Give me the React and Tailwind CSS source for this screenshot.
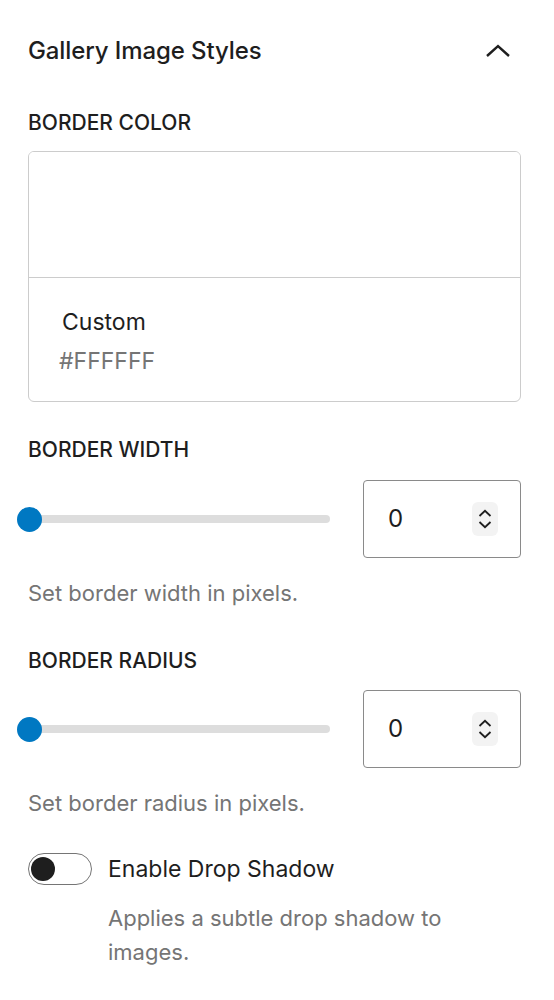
import { useState } from "react";

function Spinner() {
  return (
    <div className="flex h-[34px] w-[26px] flex-col items-center justify-center gap-[4px] rounded-[6px] bg-[#f3f3f3]">
      <svg width="14" height="8" viewBox="0 0 14 8" fill="none">
        <path d="M1.5 7 L7 1.8 L12.5 7" stroke="#1e1e1e" strokeWidth="1.8" />
      </svg>
      <svg width="14" height="8" viewBox="0 0 14 8" fill="none">
        <path d="M1.5 1 L7 6.2 L12.5 1" stroke="#1e1e1e" strokeWidth="1.8" />
      </svg>
    </div>
  );
}

function RangeRow({ value }) {
  return (
    <div className="flex items-center">
      <div className="relative flex h-[26px] w-[302px] items-center">
        <div className="h-[8px] w-full rounded-full bg-[#dddddd]" />
        <div className="absolute left-[-11px] top-[1px] h-[25px] w-[25px] rounded-full bg-[#0078c2]" />
      </div>
      <div className="ml-[33px] flex h-[78px] w-[158px] items-center justify-between rounded-[4px] border-[1.5px] border-[#8a8a8a] pl-[24px] pr-[22px]">
        <span className="text-[24px] text-[#1e1e1e]">{value}</span>
        <Spinner />
      </div>
    </div>
  );
}

export default function App() {
  const [shadow, setShadow] = useState(false);

  return (
    <main
      className="min-h-screen w-[554px] bg-white pl-[28px] pr-[33px] pt-[33px] text-[#1e1e1e]"
      style={{ fontFamily: "Inter, 'Liberation Sans', sans-serif" }}
    >
      {/* HEADER */}

      <div className="flex h-[36px] items-center justify-between">
        <h2 className="text-[24px] font-medium tracking-[-0.1px]">
          Gallery Image Styles
        </h2>
        <svg width="26" height="16" viewBox="0 0 26 16" fill="none" className="mr-[10px]">
          <path d="M2 13 L13 3 L24 13" stroke="#1e1e1e" strokeWidth="2.4" />
        </svg>
      </div>

      {/* BORDER COLOR */}

      <p className="mt-[42px] text-[21px] font-medium uppercase leading-[24px]">
        Border Color
      </p>

      <div className="mt-[16px] overflow-hidden rounded-[6px] border-[1.5px] border-[#cccccc]">
        <div className="h-[126px] border-b-[1.5px] border-[#cccccc] bg-white" />
        <div className="px-[30px] pb-[26px] pt-[28px]">
          <p className="pl-[3px] text-[23px] leading-[32px]">Custom</p>
          <p className="mt-[9px] text-[23px] leading-[28px] text-[#757575]">#FFFFFF</p>
        </div>
      </div>

      {/* BORDER WIDTH */}

      <p className="mt-[36px] text-[21px] font-medium uppercase leading-[24px]">
        Border Width
      </p>

      <div className="mt-[18px]">
        <RangeRow value="0" />
      </div>

      <p className="mt-[20px] text-[22px] leading-[30px] text-[#757575]">
        Set border width in pixels.
      </p>

      {/* BORDER RADIUS */}

      <p className="mt-[41px] text-[21px] font-medium uppercase leading-[24px]">
        Border Radius
      </p>

      <div className="mt-[17px]">
        <RangeRow value="0" />
      </div>

      <p className="mt-[20px] text-[22px] leading-[30px] text-[#757575]">
        Set border radius in pixels.
      </p>

      {/* TOGGLE */}

      <div className="mt-[34px] flex items-center">
        <button
          onClick={() => setShadow(!shadow)}
          className="flex h-[32px] w-[64px] items-center rounded-full border-[1.5px] border-[#757575] bg-white px-[2px]"
        >
          <span
            className={
              shadow
                ? "ml-auto h-[24px] w-[24px] rounded-full bg-[#1e1e1e]"
                : "h-[24px] w-[24px] rounded-full bg-[#1e1e1e]"
            }
          />
        </button>
        <span className="ml-[16px] text-[23px]">Enable Drop Shadow</span>
      </div>

      <p className="ml-[80px] mr-[20px] mt-[14px] text-[22px] leading-[34px] text-[#757575]">
        Applies a subtle drop shadow to images.
      </p>
    </main>
  );
}
